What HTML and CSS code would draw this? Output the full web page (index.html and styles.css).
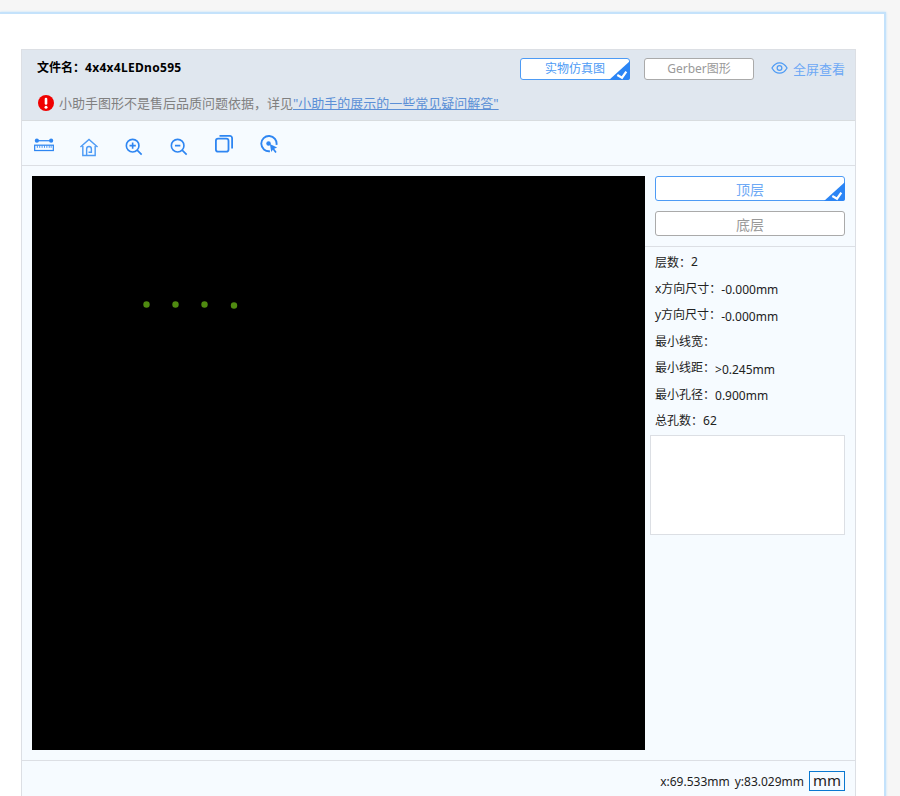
FILE: index.html
```html
<!DOCTYPE html>
<html>
<head>
    <title>小助手图形</title>
    <link rel="stylesheet" href="styles.css">
</head>
<body>
    <div class="card">
        <div class="viewer">
            <div class="head">
                <div class="head-top">
                    <div class="file-name">文件名：<span class="file-title">4x4x4LEDno595</span></div>
                    <div class="head-actions">
                        <button class="tab-btn active">实物仿真图
                            <svg class="tick" viewBox="0 0 21 19"><path d="M21 0V17a2 2 0 0 1-2 2H0Z" fill="#2b85f5"/><path d="M8.300 14l4.700 2.700 4.300-6" fill="none" stroke="#fff" stroke-width="2.200"/></svg>
                        </button>
                        <button class="tab-btn">Gerber图形</button>
                        <a class="fullscreen">
                            <svg class="eye" viewBox="0 0 18 14"><path d="M1 7C3 3.500 5.800 1.500 9 1.500S15 3.500 17 7C15 10.500 12.200 12.500 9 12.500S3 10.500 1 7Z" fill="none" stroke="#4d9bf5" stroke-width="1.300"/><circle cx="9" cy="7" r="2.500" fill="none" stroke="#4d9bf5" stroke-width="1.300"/></svg>
                            全屏查看
                        </a>
                    </div>
                </div>
                <div class="notice">
                    <svg class="warn" viewBox="0 0 16 16"><circle cx="8" cy="8" r="8" fill="#f00000"/><rect x="6.700" y="2.800" width="2.600" height="7" rx="1.300" fill="#fff"/><circle cx="8" cy="12.200" r="1.500" fill="#fff"/></svg>
                    <span>小助手图形不是售后品质问题依据，详见<a class="notice-link">"小助手的展示的一些常见疑问解答"</a></span>
                </div>
            </div>

            <div class="toolbar">
                <svg class="tool tool-ruler" viewBox="0 0 21 14" fill="none" stroke="#2e86f2" stroke-width="1.300"><circle cx="3" cy="2.500" r="2.200" fill="#2e86f2" stroke="none"/><circle cx="18" cy="2.500" r="2.200" fill="#2e86f2" stroke="none"/><path d="M3 2.500H18"/><rect x="0.700" y="7.200" width="19.600" height="5.600"/><path d="M3.500 7.500V10M6 7.500V10M8.500 7.500V10M11 7.500V10M13.500 7.500V10M16 7.500V10M18 7.500V10" stroke-width="0.900"/></svg>
                <svg class="tool tool-home" viewBox="0 0 20 20" fill="none" stroke="#4d9bf5" stroke-width="1.500"><path d="M1 9.500L10 1.500L19 9.500"/><path d="M3.500 8.500V18.500H16.500V8.500"/><path d="M7.500 18.500V11.500A2.500 2.500 0 0 1 12.500 11.500V15H9.500"/></svg>
                <svg class="tool tool-zoom" viewBox="0 0 20 20" fill="none" stroke="#2e86f2" stroke-width="1.800"><circle cx="8.500" cy="8.500" r="7"/><path d="M13.500 13.500L18.500 18.500M5 8.500H12M8.500 5V12"/></svg>
                <svg class="tool tool-zoom" viewBox="0 0 20 20" fill="none" stroke="#2e86f2" stroke-width="1.800"><circle cx="8.500" cy="8.500" r="7"/><path d="M13.500 13.500L18.500 18.500M5.500 8.500H11.500"/></svg>
                <svg class="tool" viewBox="0 0 20 20" fill="none" stroke="#2e86f2" stroke-width="2"><rect x="1" y="4" width="14" height="14.500" rx="2.500"/><path d="M5 1H16.500A2.500 2.500 0 0 1 19 3.500V15"/></svg>
                <svg class="tool" viewBox="0 0 20 20" fill="none"><path d="M11 18A8.500 8.500 0 1 1 18.300 11" stroke="#2e86f2" stroke-width="2.100"/><circle cx="9.500" cy="9.500" r="2.500" fill="#2e86f2"/><path d="M11 10L19 14L15.800 15.300L18.500 19L17 20L14.300 16.300L12.500 19Z" fill="#2e86f2"/></svg>
            </div>

            <div class="main">
                <div class="canvas-wrap">
                    <svg class="board" viewBox="0 0 613 574">
                        <g fill="#4f8a10">
                            <circle cx="114.500" cy="128.500" r="3.200"/>
                            <circle cx="143.500" cy="128.500" r="3.200"/>
                            <circle cx="172.500" cy="128.500" r="3.200"/>
                            <circle cx="202" cy="129.500" r="3.200"/>
                        </g>
                    </svg>
                </div>
                <div class="side">
                    <div class="layers">
                        <button class="layer-btn active">顶层
                            <svg class="tick" viewBox="0 0 21 19"><path d="M21 0V17a2 2 0 0 1-2 2H0Z" fill="#2b85f5"/><path d="M8.300 14l4.700 2.700 4.300-6" fill="none" stroke="#fff" stroke-width="2.200"/></svg>
                        </button>
                        <button class="layer-btn">底层</button>
                    </div>
                    <ul class="info">
                        <li><span class="info-label">层数：</span><span>2</span></li>
                        <li><span class="info-label">x方向尺寸：</span><span class="info-val">-0.000mm</span></li>
                        <li><span class="info-label">y方向尺寸：</span><span class="info-val">-0.000mm</span></li>
                        <li><span class="info-label">最小线宽：</span></li>
                        <li><span class="info-label">最小线距：</span><span class="info-val">&gt;0.245mm</span></li>
                        <li><span class="info-label">最小孔径：</span><span class="info-val">0.900mm</span></li>
                        <li><span class="info-label">总孔数：</span><span>62</span></li>
                    </ul>
                    <div class="note-box"></div>
                </div>
            </div>

            <div class="foot">
                <span>x:69.533mm</span>
                <span>y:83.029mm</span>
                <span class="unit">mm</span>
            </div>
        </div>
    </div>
</body>
</html>
```

FILE: styles.css
```css
html, body {
    margin: 0;
    height: 796px;
    overflow: hidden;
}
body {
    background: #f6f6f6;
    padding-top: 12px;
    box-sizing: border-box;
    font-family: "Noto Sans", "Noto Sans CJK SC", sans-serif;
    font-size: 12px;
    color: #333;
}
.card {
    width: 886px;
    height: 800px;
    box-sizing: border-box;
    background: #fff;
    border-top: 2px solid #c4e2fb;
    border-right: 2px solid #c4e2fb;
    box-shadow: 0 0 2px #bcdffb;
    padding: 35px 28px 0 21px;
}
.viewer {
    border: 1px solid #dcdfe4;
    background: #f6fbff;
    height: 760px;
}
.head {
    height: 71px;
    box-sizing: border-box;
    background: #e0e7ef;
    border-bottom: 1px solid #d8dcdf;
    padding: 8px 10px 0 15px;
}
.head-top {
    display: flex;
    justify-content: space-between;
}
.file-name {
    font-size: 12px;
    font-weight: bold;
    color: #000;
    line-height: 20px;
}
.file-title {
    letter-spacing: 0.3px;
}
.head-actions {
    display: flex;
    align-items: center;
    gap: 14px;
}
.tab-btn {
    position: relative;
    width: 110px;
    height: 22px;
    box-sizing: border-box;
    padding: 0;
    background: #fff;
    border: 1px solid #aaa;
    border-radius: 3px;
    color: #999;
    font: inherit;
    line-height: 18px;
}
.tab-btn.active {
    border-color: #4d9bf5;
    color: #4d9bf5;
}
.tick {
    position: absolute;
    right: -1px;
    bottom: -1px;
    width: 21px;
    height: 19px;
}
.fullscreen {
    display: flex;
    align-items: center;
    gap: 5px;
    margin-left: 3px;
    padding-bottom: 2px;
    font-size: 13px;
    color: #6ea9f5;
    white-space: nowrap;
}
.eye {
    width: 17px;
    height: 14px;
}
.notice {
    display: flex;
    align-items: center;
    gap: 5px;
    margin-top: 14px;
    padding-left: 1px;
    font-size: 13px;
    color: #808080;
    line-height: 18px;
}
.warn {
    width: 16px;
    height: 16px;
    flex: none;
}
.notice-link {
    color: #5b8fd6;
    text-decoration: underline;
}
.toolbar {
    height: 45px;
    box-sizing: border-box;
    border-bottom: 1px solid #dcdfe4;
    display: grid;
    grid-template-columns: repeat(6, 45px);
    align-items: start;
    padding: 14px 0 0 13px;
}
.tool {
    display: block;
    width: 18px;
    height: 18px;
}
.tool-ruler {
    width: 20px;
    height: 14px;
    margin: 3px 0 0 -1px;
}
.tool-home {
    width: 20px;
    height: 19px;
    margin: 3px 0 0 -1px;
}
.tool-zoom {
    margin-top: 3px;
}
.main {
    display: flex;
    height: 595px;
    box-sizing: border-box;
    border-bottom: 1px solid #dcdfe4;
}
.canvas-wrap {
    padding: 10px 0 0 10px;
}
.board {
    display: block;
    width: 613px;
    height: 574px;
    background: #000;
}
.side {
    flex: 1;
    min-width: 0;
}
.layers {
    padding: 10px;
    border-bottom: 1px solid #dcdfe4;
    display: flex;
    flex-direction: column;
    gap: 10px;
}
.layer-btn {
    position: relative;
    height: 25px;
    padding: 0;
    background: #fff;
    border: 1px solid #aaa;
    border-radius: 3px;
    color: #999;
    font: inherit;
    font-size: 14px;
}
.layer-btn.active {
    border-color: #4d9bf5;
    color: #6ea9f5;
}
.info {
    list-style: none;
    margin: 0;
    padding: 2px 0 0 10px;
    color: #222;
}
.info li {
    height: 26.500px;
    white-space: nowrap;
    display: flex;
    align-items: center;
}
.info li:first-child {
    height: 25.500px;
}
.info-val {
    position: relative;
    top: 2px;
    color: #222;
}
.note-box {
    width: 195px;
    height: 100px;
    box-sizing: border-box;
    margin: 1px 0 0 5px;
    background: #fff;
    border: 1px solid #dcdfe4;
}
.foot {
    display: flex;
    justify-content: flex-end;
    align-items: center;
    gap: 5px;
    height: 40px;
    padding-right: 10px;
    box-sizing: border-box;
    color: #222;
}
.unit {
    width: 36px;
    height: 20px;
    box-sizing: border-box;
    border: 1px solid #0a78d0;
    text-align: center;
    font-size: 15px;
    line-height: 17px;
}
```
